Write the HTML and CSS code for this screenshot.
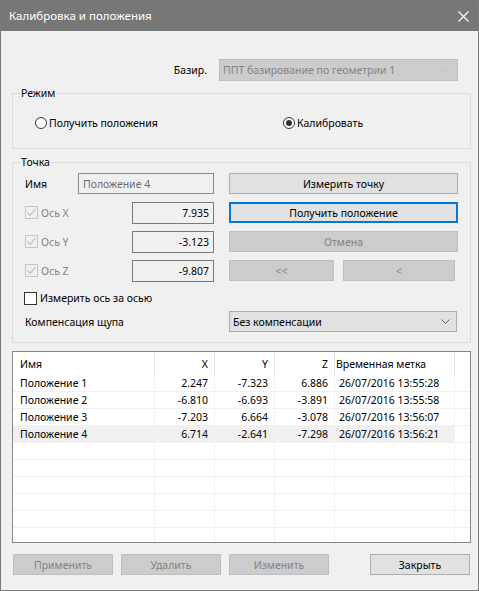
FILE: index.html
```html
<!DOCTYPE html>
<html lang="ru">
<head>
  <meta charset="UTF-8">
  <title>Калибровка и положения</title>
  <link rel="stylesheet" href="styles.css">
</head>
<body>

  <div class="window">
    <div class="titlebar">
      <span class="title">Калибровка и положения</span>
      <svg class="close" width="11" height="11" viewBox="0 0 11 11">
        <path d="M0.5 0.5 L10.5 10.5 M10.5 0.5 L0.5 10.5" stroke="#fff" stroke-width="1.1" fill="none"/>
      </svg>
    </div>

    <div class="content">
      <div class="base-row">
        <span class="base-label">Базир.</span>
        <div class="combo disabled base-combo">
          <span>ППТ базирование по геометрии 1</span>
          <svg class="chevron" width="9" height="5" viewBox="0 0 9 5"><path d="M0.5 0.5 L4.5 4.5 L8.5 0.5" fill="none"/></svg>
        </div>
      </div>

      <fieldset class="group mode-group">
        <legend>Режим</legend>
        <div class="group-body">
          <div class="radio-row">
            <div class="radio first"><span class="radio-dot"></span>Получить положения</div>
            <div class="radio checked"><span class="radio-dot"></span>Калибровать</div>
          </div>
        </div>
      </fieldset>

      <fieldset class="group point-group">
        <legend>Точка</legend>
        <div class="group-body">

          <div class="point-row">
            <div class="point-left">
              <span>Имя</span>
              <div class="textbox name-box">Положение 4</div>
            </div>
            <button class="btn wide">Измерить точку</button>
          </div>

          <div class="point-row">
            <div class="point-left">
              <div class="check disabled"><span class="check-box"><svg width="11" height="11" viewBox="0 0 11 11"><path d="M1.5 5.5 L4 8.5 L9.5 2" fill="none"/></svg></span>Ось X</div>
              <div class="textbox value-box">7.935</div>
            </div>
            <button class="btn wide focused">Получить положение</button>
          </div>

          <div class="point-row">
            <div class="point-left">
              <div class="check disabled"><span class="check-box"><svg width="11" height="11" viewBox="0 0 11 11"><path d="M1.5 5.5 L4 8.5 L9.5 2" fill="none"/></svg></span>Ось Y</div>
              <div class="textbox value-box">-3.123</div>
            </div>
            <button class="btn wide disabled">Отмена</button>
          </div>

          <div class="point-row">
            <div class="point-left">
              <div class="check disabled"><span class="check-box"><svg width="11" height="11" viewBox="0 0 11 11"><path d="M1.5 5.5 L4 8.5 L9.5 2" fill="none"/></svg></span>Ось Z</div>
              <div class="textbox value-box">-9.807</div>
            </div>
            <div class="nav-buttons">
              <button class="btn disabled prev-all">&lt;&lt;</button>
              <button class="btn disabled prev">&lt;</button>
            </div>
          </div>

          <div class="check axis-check"><span class="check-box"></span>Измерить ось за осью</div>

          <div class="probe-row">
            <span>Компенсация щупа</span>
            <div class="combo probe-combo">
              <span>Без компенсации</span>
              <svg class="chevron" width="9" height="5" viewBox="0 0 9 5"><path d="M0.5 0.5 L4.5 4.5 L8.5 0.5" fill="none"/></svg>
            </div>
          </div>

        </div>
      </fieldset>

      <div class="grid-box">
        <table class="grid">
          <thead>
            <tr>
              <th class="c-name">Имя</th>
              <th class="c-num">X</th>
              <th class="c-num">Y</th>
              <th class="c-num">Z</th>
              <th class="c-time">Временная метка</th>
              <th class="c-fill"></th>
            </tr>
          </thead>
          <tbody>
            <tr>
              <td>Положение 1</td><td class="num">2.247</td><td class="num">-7.323</td><td class="num">6.886</td><td class="time">26/07/2016 13:55:28</td><td class="fill"></td>
            </tr>
            <tr>
              <td>Положение 2</td><td class="num">-6.810</td><td class="num">-6.693</td><td class="num">-3.891</td><td class="time">26/07/2016 13:55:58</td><td class="fill"></td>
            </tr>
            <tr>
              <td>Положение 3</td><td class="num">-7.203</td><td class="num">6.664</td><td class="num">-3.078</td><td class="time">26/07/2016 13:56:07</td><td class="fill"></td>
            </tr>
            <tr class="selected">
              <td>Положение 4</td><td class="num">6.714</td><td class="num">-2.641</td><td class="num">-7.298</td><td class="time">26/07/2016 13:56:21</td><td class="fill"></td>
            </tr>
            <tr><td></td><td></td><td></td><td></td><td></td><td class="fill"></td></tr>
            <tr><td></td><td></td><td></td><td></td><td></td><td class="fill"></td></tr>
            <tr><td></td><td></td><td></td><td></td><td></td><td class="fill"></td></tr>
            <tr><td></td><td></td><td></td><td></td><td></td><td class="fill"></td></tr>
            <tr><td></td><td></td><td></td><td></td><td></td><td class="fill"></td></tr>
            <tr><td></td><td></td><td></td><td></td><td></td><td class="fill"></td></tr>
          </tbody>
        </table>
      </div>

      <div class="bottom-row">
        <button class="btn disabled">Применить</button>
        <button class="btn disabled">Удалить</button>
        <button class="btn disabled">Изменить</button>
        <button class="btn close-btn">Закрыть</button>
      </div>
    </div>
  </div>

</body>
</html>
```

FILE: styles.css
```css
* {
  box-sizing: border-box;
}

body {
  margin: 0;
  font-family: 'Noto Sans', 'Segoe UI', sans-serif;
  font-size: 10.5px;
  line-height: 16px;
  color: #000;
  background-color: #fff;
}

.window {
  width: 479px;
  height: 591px;
  border: 1px solid #7a7a7a;
  background-color: #f0f0f0;
  overflow: hidden;
}

.titlebar {
  height: 30px;
  background-color: #777777;
  display: flex;
  align-items: center;
  justify-content: space-between;
  padding: 0 9px 0 8px;
  color: #fff;
}

.title {
  font-size: 11.5px;
}

.close {
  display: block;
  margin-top: 1px;
}

.content {
  padding: 28px 7px 0 11px;
}

/* base combo */
.base-row {
  display: flex;
  justify-content: flex-end;
  align-items: center;
  gap: 12px;
  padding-right: 13px;
}

.combo {
  height: 22px;
  border: 1px solid #adadad;
  background-color: #e1e1e1;
  display: flex;
  align-items: center;
  justify-content: space-between;
  padding: 0 6px 0 3px;
}

.combo .chevron path {
  stroke: #606060;
  stroke-width: 1;
}

.combo.disabled {
  background-color: #cccccc;
  border-color: #bfbfbf;
  color: #838383;
}

.combo.disabled .chevron path {
  stroke: #bfbfbf;
}

.base-combo {
  width: 239px;
}

/* group boxes */
.group {
  margin: 0;
  padding: 0;
  border: 1px solid #dcdcdc;
  width: 459px;
}

.group legend {
  margin-left: 7px;
  padding: 0 1px;
  line-height: 16px;
}

.mode-group {
  margin-top: 4px;
}

.mode-group .group-body {
  padding: 14px 0 17px 22px;
}

.radio-row {
  display: flex;
  height: 16px;
  align-items: center;
}

.radio {
  display: flex;
  align-items: center;
  gap: 2px;
}

.radio.first {
  width: 248px;
}

.radio-dot {
  width: 12px;
  height: 12px;
  border: 1px solid #333;
  border-radius: 50%;
  background-color: #fff;
  display: flex;
  align-items: center;
  justify-content: center;
}

.radio.checked .radio-dot::after {
  content: "";
  width: 6px;
  height: 6px;
  border-radius: 50%;
  background-color: #333;
}

.point-group {
  margin-top: 5px;
}

.point-group .group-body {
  padding: 3px 12px 10px 11px;
}

.point-row {
  display: flex;
  justify-content: space-between;
  align-items: center;
  height: 21px;
  margin-bottom: 8px;
}

.point-left {
  width: 190px;
  display: flex;
  justify-content: space-between;
  align-items: center;
  padding-left: 1px;
}

.textbox {
  height: 21px;
  border: 1px solid #7a7a7a;
  background-color: #f0f0f0;
  padding: 0 4px;
  display: flex;
  align-items: center;
}

.name-box {
  width: 136px;
  border-color: #8d8d8d;
  color: #6d6d6d;
}

.value-box {
  width: 82px;
  height: 22px;
  justify-content: flex-end;
}

.btn {
  font-family: inherit;
  font-size: 10.5px;
  line-height: 16px;
  height: 21px;
  padding: 0;
  border: 1px solid #adadad;
  background-color: #e1e1e1;
  color: #000;
}

.btn.wide {
  width: 229px;
}

.btn.focused {
  border: 2px solid #0078d7;
}

.btn.disabled {
  background-color: #cccccc;
  border-color: #bfbfbf;
  color: #838383;
}

.nav-buttons {
  width: 229px;
  display: flex;
  gap: 9px;
}

.prev-all {
  width: 105px;
}

.prev {
  width: 112px;
}

.check {
  display: flex;
  align-items: center;
  gap: 3px;
}

.check-box {
  width: 13px;
  height: 13px;
  border: 1px solid #333;
  background-color: #fff;
  display: flex;
  align-items: center;
  justify-content: center;
}

.check.disabled {
  color: #838383;
}

.check.disabled .check-box {
  border-color: #c5c5c5;
  background-color: #f0f0f0;
}

.check-box svg path {
  stroke: #c5c5c5;
  stroke-width: 1.2;
}

.axis-check {
  height: 16px;
  margin-top: 9px;
}

.probe-row {
  display: flex;
  justify-content: space-between;
  align-items: center;
  margin-top: 5px;
  padding-left: 1px;
}

.probe-combo {
  width: 228px;
  height: 21px;
  margin-right: 1px;
}

/* table */
.grid-box {
  margin-top: 8px;
  width: 459px;
  height: 192px;
  border: 1px solid #828790;
  background-color: #fff;
  overflow: hidden;
}

.grid {
  width: 457px;
  table-layout: fixed;
  border-collapse: separate;
  border-spacing: 0;
}

.grid th {
  height: 23px;
  font-weight: normal;
  padding: 0 6px;
  border-right: 1px solid #e5e5e5;
}

.grid th.c-name { width: 142px; text-align: left; padding-left: 7px; }
.grid th.c-num { width: 60px; text-align: right; }
.grid th.c-time { width: 120px; text-align: left; padding-left: 1px; }
.grid th.c-fill { width: 15px; border-right: none; }

.grid td {
  height: 17px;
  padding: 0 6px 0 7px;
  border-right: 1px solid #f0f0f0;
  border-bottom: 1px solid #f0f0f0;
  white-space: nowrap;
  overflow: hidden;
}

.grid td.num {
  text-align: right;
  padding-right: 6px;
}

.grid td.time {
  padding-left: 4px;
}

.grid td.fill {
  border-right: none;
}

.grid tr.selected td {
  background-color: #f0f0f0;
}

.grid tr.selected td.fill {
  background-color: #fff;
}

/* bottom buttons */
.bottom-row {
  display: flex;
  gap: 8px;
  margin-top: 11px;
  padding-left: 1px;
}

.bottom-row .btn {
  width: 100px;
}

.bottom-row .close-btn {
  margin-left: auto;
  margin-right: 1px;
}
```
